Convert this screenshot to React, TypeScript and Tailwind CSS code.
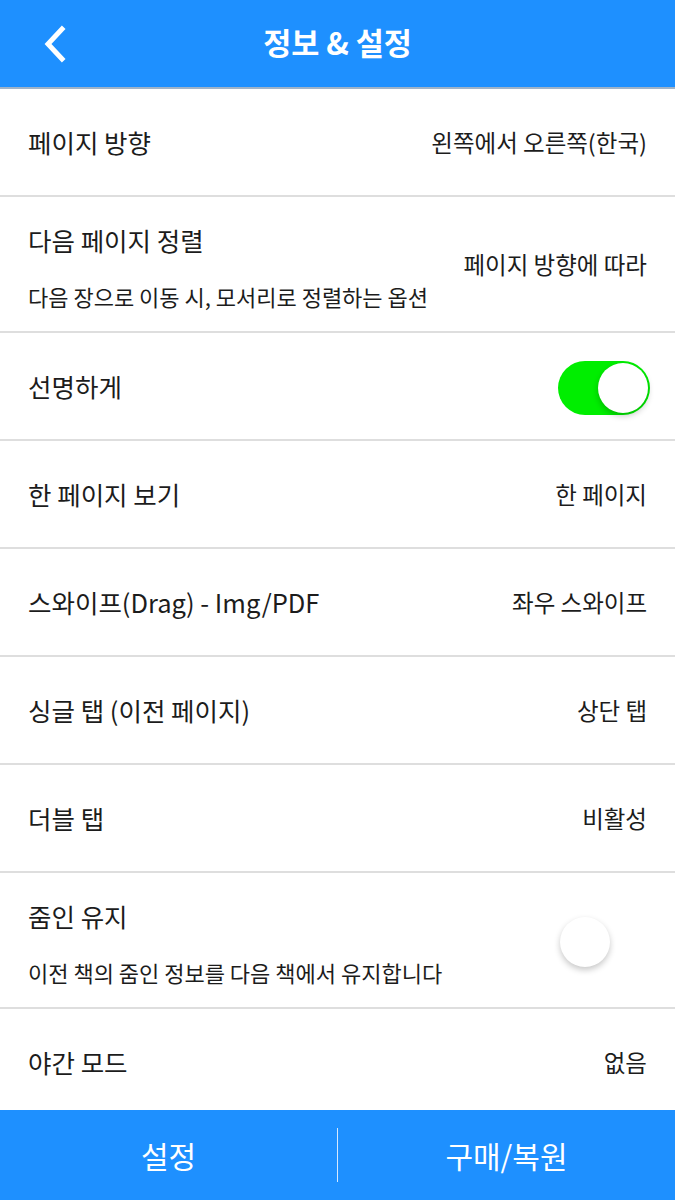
import React, { useState } from "react";

type Row = {
  title: string;
  sub?: string;
  value?: string;
  toggle?: boolean;
};

const rows: Row[] = [
  { title: "페이지 방향", value: "왼쪽에서 오른쪽(한국)" },
  {
    title: "다음 페이지 정렬",
    sub: "다음 장으로 이동 시, 모서리로 정렬하는 옵션",
    value: "페이지 방향에 따라",
  },
  { title: "선명하게", toggle: true },
  { title: "한 페이지 보기", value: "한 페이지" },
  { title: "스와이프(Drag) - Img/PDF", value: "좌우 스와이프" },
  { title: "싱글 탭 (이전 페이지)", value: "상단 탭" },
  { title: "더블 탭", value: "비활성" },
  {
    title: "줌인 유지",
    sub: "이전 책의 줌인 정보를 다음 책에서 유지합니다",
    toggle: false,
  },
  { title: "야간 모드", value: "없음" },
];

const Toggle = ({ on, onChange }: { on: boolean; onChange: () => void }) => (
  <button
    onClick={onChange}
    className={`relative w-[92px] h-[54px] -mr-[3px] mt-[3px] rounded-full shrink-0 ${
      on ? "bg-[#00ee00]" : "bg-white"
    }`}
  >
    <span
      className={`absolute top-[2px] w-[50px] h-[50px] rounded-full bg-white shadow-[0_3px_6px_rgba(0,0,0,0.22)] ${
        on ? "left-[40px]" : "left-[2px]"
      }`}
    />
  </button>
);

const SettingRow = ({ row }: { row: Row }) => {
  const [on, setOn] = useState(!!row.toggle);
  const tall = !!row.sub;

  return (
    <div
      className={`flex items-center justify-between px-7 border-b-2 border-[#dedede] shrink-0 ${
        tall ? "h-[136px]" : "h-[108px]"
      }`}
    >
      {tall ? (
        <div className="flex flex-col self-start pt-[26px]">
          <span className="text-[25.5px] leading-[34px] text-[#1c1c1c]">{row.title}</span>
          <span className="mt-[24px] text-[22px] leading-[30px] text-[#1c1c1c]">{row.sub}</span>
        </div>
      ) : (
        <span className="text-[25.5px] leading-[34px] text-[#1c1c1c]">{row.title}</span>
      )}
      {row.toggle !== undefined ? (
        <Toggle on={on} onChange={() => setOn((prev) => !prev)} />
      ) : (
        <span className="text-[23.5px] leading-[34px] text-[#1c1c1c]">{row.value}</span>
      )}
    </div>
  );
};

export default function App() {
  return (
    <div
      className="w-[675px] h-[1200px] flex flex-col bg-white overflow-hidden"
      style={{ fontFamily: '"Noto Sans CJK KR", "Noto Sans", sans-serif' }}
    >
      <div className="relative h-[89px] shrink-0 bg-[#1e90ff] flex items-center justify-center border-b-2 border-[#9fb3c8]">
        <button className="absolute left-[38px] top-[24px] w-[32px] h-[40px] flex items-center justify-center">
          <svg width="26" height="38" viewBox="0 0 26 38" fill="none">
            <polyline
              points="21,4 7,19 21,34"
              stroke="white"
              strokeWidth="5"
              strokeLinecap="square"
              strokeLinejoin="miter"
            />
          </svg>
        </button>
        <span className="text-white text-[30.5px] font-bold leading-none -mt-[3px]">정보 &amp; 설정</span>
      </div>

      <div className="flex-1 flex flex-col overflow-hidden">
        {rows.map((row) => (
          <SettingRow key={row.title} row={row} />
        ))}
      </div>

      <div className="h-[90px] shrink-0 bg-[#1e90ff] flex items-center">
        <button className="flex-1 text-white text-[30px] leading-none">설정</button>
        <div className="w-px h-[54px] bg-[#d6e9ff]" />
        <button className="flex-1 text-white text-[30px] leading-none">구매/복원</button>
      </div>
    </div>
  );
}
